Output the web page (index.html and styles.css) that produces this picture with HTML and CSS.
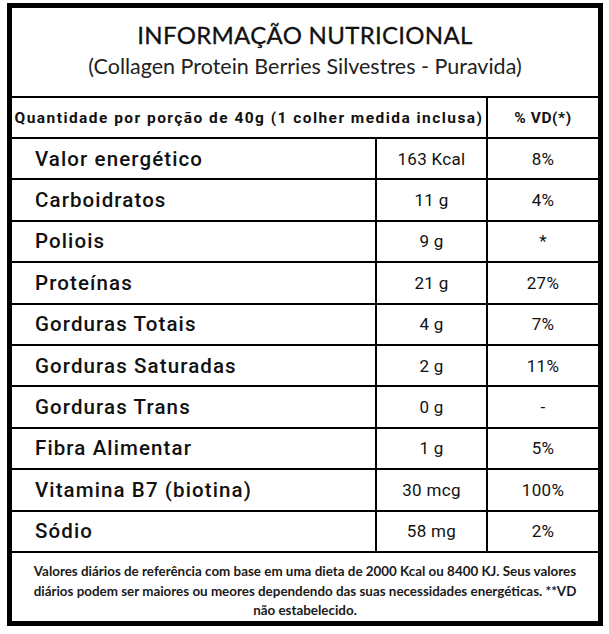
FILE: index.html
```html
<!DOCTYPE html>
<html lang="pt">
<head>
<meta charset="utf-8">
<title>Informação Nutricional</title>
<link rel="stylesheet" href="styles.css">
</head>
<body>
<div class="card">
  <div class="title-block">
    <div class="title">INFORMAÇÃO NUTRICIONAL</div>
    <div class="subtitle">(Collagen Protein Berries Silvestres - Puravida)</div>
  </div>
  <div class="head-row">
    <div class="head-cell">Quantidade por porção de 40g (1 colher medida inclusa)</div>
    <div class="head-cell head-vd">% VD(*)</div>
  </div>
  <div class="row"><div class="name">Valor energético</div><div class="val">163 Kcal</div><div class="val">8%</div></div>
  <div class="row"><div class="name">Carboidratos</div><div class="val">11 g</div><div class="val">4%</div></div>
  <div class="row"><div class="name">Poliois</div><div class="val">9 g</div><div class="val">*</div></div>
  <div class="row"><div class="name">Proteínas</div><div class="val">21 g</div><div class="val">27%</div></div>
  <div class="row"><div class="name">Gorduras Totais</div><div class="val">4 g</div><div class="val">7%</div></div>
  <div class="row"><div class="name">Gorduras Saturadas</div><div class="val">2 g</div><div class="val">11%</div></div>
  <div class="row"><div class="name">Gorduras Trans</div><div class="val">0 g</div><div class="val">-</div></div>
  <div class="row"><div class="name">Fibra Alimentar</div><div class="val">1 g</div><div class="val">5%</div></div>
  <div class="row"><div class="name">Vitamina B7 (biotina)</div><div class="val">30 mcg</div><div class="val">100%</div></div>
  <div class="row"><div class="name">Sódio</div><div class="val">58 mg</div><div class="val">2%</div></div>
  <div class="footer"><p class="note">Valores diários de referência com base em uma dieta de 2000 Kcal ou 8400 KJ. Seus valores<br>diários podem ser maiores ou meores dependendo das suas necessidades energéticas. **VD<br>não estabelecido.</p></div>
</div>
</body>
</html>
```

FILE: styles.css
```css
html, body {
  margin: 0;
  padding: 0;
  background: #fff;
}
body {
  color: #111;
  font-family: Roboto, "DejaVu Sans", sans-serif;
}
.card {
  box-sizing: border-box;
  width: 596px;
  height: 623px;
  margin: 3px 0 0 7px;
  border: 5px solid #000;
  display: flex;
  flex-direction: column;
}
.title-block {
  height: 90px;
  border-bottom: 2px solid #000;
  display: flex;
  flex-direction: column;
  align-items: center;
  justify-content: center;
  padding-bottom: 6px;
  box-sizing: border-box;
  font-family: Lato, "Liberation Sans", sans-serif;
}
.title {
  font-size: 24px;
  line-height: 30px;
  color: #111;
  letter-spacing: 0.3px;
  -webkit-text-stroke: 0.3px #111;
}
.subtitle {
  font-size: 21.5px;
  line-height: 26px;
  margin-top: 3px;
  color: #222;
}
.head-row {
  display: grid;
  grid-template-columns: 474px 1fr;
  height: 41px;
  box-sizing: border-box;
  border-bottom: 2px solid #000;
}
.head-cell {
  display: flex;
  align-items: center;
  justify-content: center;
  font-weight: 700;
  font-size: 15.5px;
  letter-spacing: 1.45px;
  white-space: nowrap;
}
.head-vd {
  border-left: 2px solid #000;
  font-size: 15.5px;
  letter-spacing: 0.6px;
}
.row {
  display: grid;
  grid-template-columns: 363px 111px 1fr;
  height: 41.4px;
  box-sizing: border-box;
  border-bottom: 2px solid #000;
}
.name {
  display: flex;
  align-items: center;
  padding-left: 23px;
  font-size: 20.5px;
  font-weight: 500;
  letter-spacing: 1.1px;
}
.val {
  display: flex;
  align-items: center;
  justify-content: center;
  border-left: 2px solid #000;
  font-size: 17px;
  letter-spacing: 0.3px;
}
.footer {
  flex: 1;
  display: flex;
  align-items: center;
  justify-content: center;
  padding: 9px 0 0;
}
.note {
  margin: 0;
  text-align: center;
  white-space: nowrap;
  font-family: Lato, "Liberation Sans", sans-serif;
  font-weight: 700;
  font-size: 13.4px;
  line-height: 19.5px;
  color: #1a1a1a;
}
```
